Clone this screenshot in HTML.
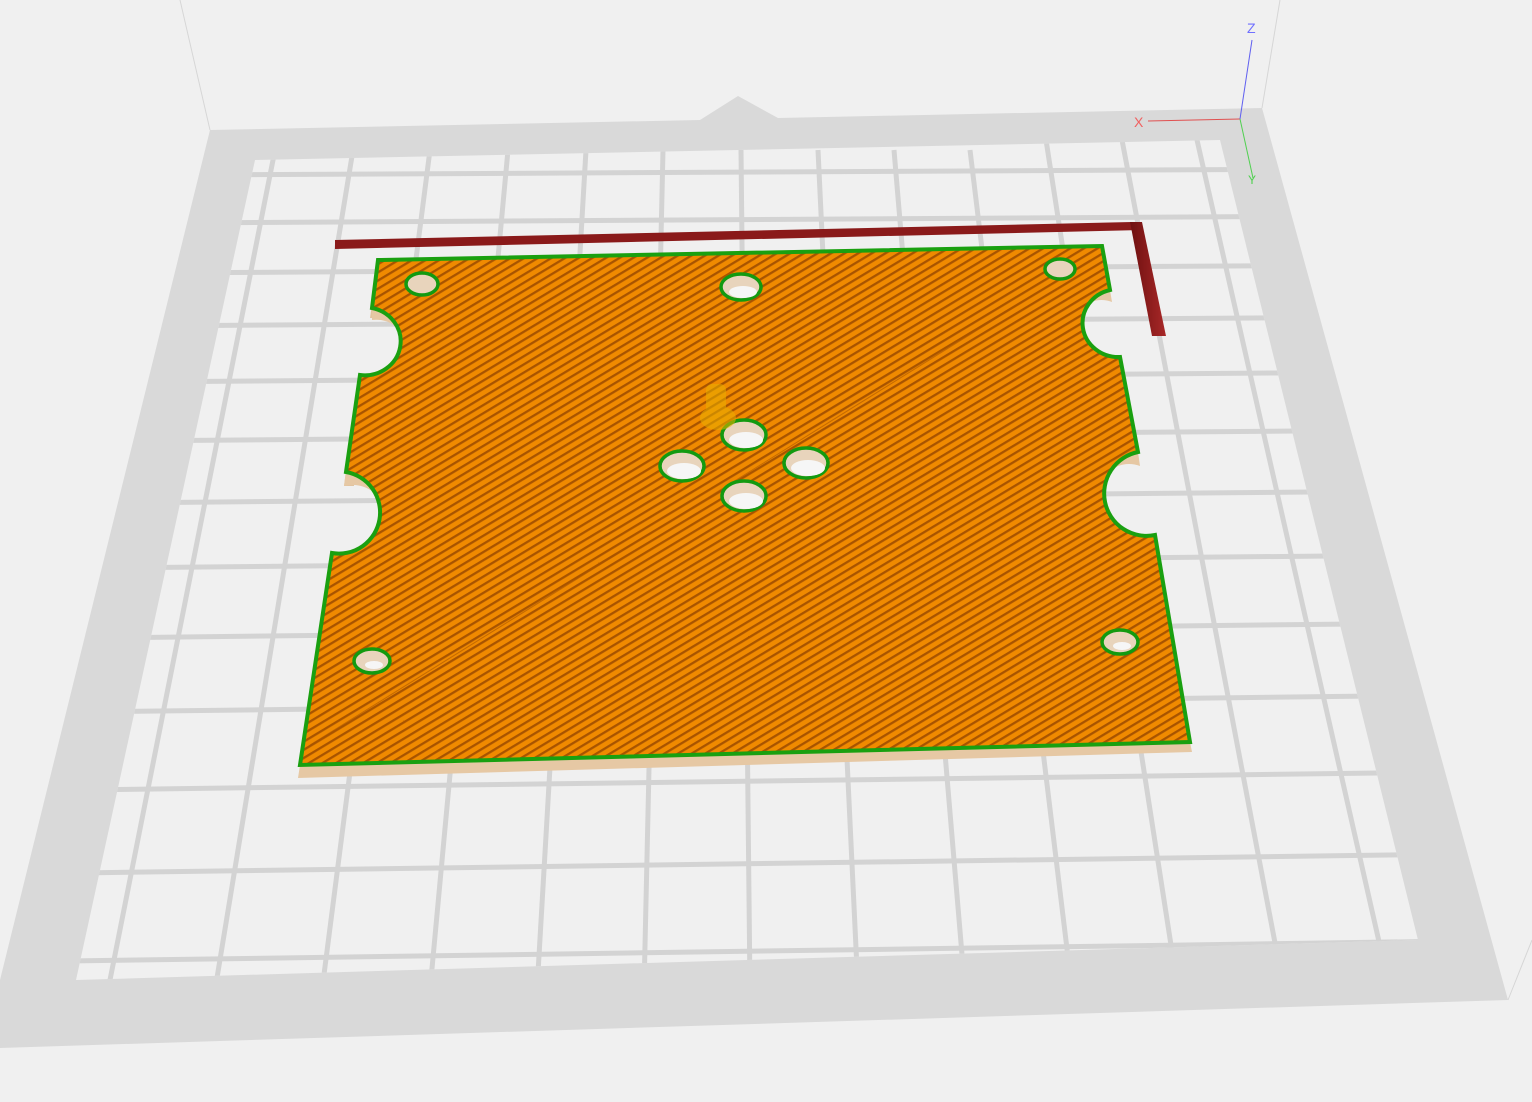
<!DOCTYPE html>
<html><head><meta charset="utf-8"><style>
html,body{margin:0;padding:0;background:#f0f0f0;width:1532px;height:1102px;overflow:hidden}
svg{display:block}
</style></head><body>
<svg width="1532" height="1102" viewBox="0 0 1532 1102" xmlns="http://www.w3.org/2000/svg">
<defs>
<pattern id="st" patternUnits="userSpaceOnUse" width="7" height="7" patternTransform="rotate(-31)">
<rect width="7" height="7" fill="#f08a00"/>
<rect y="0" width="7" height="2.3" fill="#a85400"/>
</pattern>
<clipPath id="bed"><polygon points="255,160 1220,140 1418,940 76,980"/></clipPath>
<linearGradient id="bar" x1="0" x2="1"><stop offset="0" stop-color="#6e1010"/><stop offset="1" stop-color="#a82828"/></linearGradient>
</defs>
<rect width="1532" height="1102" fill="#f0f0f0"/>
<line x1="180" y1="0" x2="210" y2="130" stroke="#d6d6d6" stroke-width="1"/>
<line x1="1280" y1="0" x2="1262" y2="108" stroke="#d6d6d6" stroke-width="1"/>
<line x1="1532" y1="940" x2="1508" y2="1000" stroke="#d6d6d6" stroke-width="1"/>
<polygon points="210,130 700,120 738,96 778,118 1262,108 1508,1000 0,1048 0,980" fill="#d9d9d9"/>
<polygon points="255,160 1220,140 1418,940 76,980" fill="#f0f0f0"/>
<g clip-path="url(#bed)" stroke="#d3d3d3" stroke-width="5">
<line x1="275" y1="150" x2="108" y2="990"/>
<line x1="353" y1="150" x2="215" y2="990"/>
<line x1="430" y1="150" x2="322" y2="990"/>
<line x1="508" y1="150" x2="430" y2="990"/>
<line x1="586" y1="150" x2="537" y2="990"/>
<line x1="663" y1="150" x2="644" y2="990"/>
<line x1="741" y1="150" x2="750" y2="990"/>
<line x1="818" y1="150" x2="858" y2="990"/>
<line x1="894" y1="150" x2="965" y2="990"/>
<line x1="970" y1="150" x2="1072" y2="990"/>
<line x1="1046" y1="140" x2="1178" y2="990"/>
<line x1="1122" y1="140" x2="1284" y2="990"/>
<line x1="1197" y1="140" x2="1390" y2="990"/>
<line x1="0" y1="176" x2="1532" y2="168"/>
<line x1="0" y1="224" x2="1532" y2="215"/>
<line x1="0" y1="274" x2="1532" y2="264"/>
<line x1="0" y1="327" x2="1532" y2="316"/>
<line x1="0" y1="383" x2="1532" y2="371"/>
<line x1="0" y1="442" x2="1532" y2="429"/>
<line x1="0" y1="504" x2="1532" y2="490"/>
<line x1="0" y1="569" x2="1532" y2="554"/>
<line x1="0" y1="639" x2="1532" y2="622"/>
<line x1="0" y1="713" x2="1532" y2="694"/>
<line x1="0" y1="791" x2="1532" y2="771"/>
<line x1="0" y1="874" x2="1532" y2="853"/>
<line x1="0" y1="962" x2="1532" y2="940"/>
</g>
<line x1="1148" y1="121" x2="1240" y2="119" stroke="#e05050" stroke-width="1"/>
<text x="1134" y="127" font-family="Liberation Sans, sans-serif" font-size="14" fill="#f06060">X</text>
<line x1="1240" y1="119" x2="1252" y2="40" stroke="#6060f0" stroke-width="1"/>
<text x="1247" y="33" font-family="Liberation Sans, sans-serif" font-size="14" fill="#7070ff">Z</text>
<line x1="1240" y1="119" x2="1253" y2="178" stroke="#50d050" stroke-width="1"/>
<text x="1248" y="184" font-family="Liberation Sans, sans-serif" font-size="12" fill="#50d050">Y</text>
<polygon points="335,240 1132,222 1142,230 335,249" fill="#8a1a1a"/>
<polygon points="1130,222 1142,222 1166,336 1152,336" fill="url(#bar)"/>
<!-- plate thickness -->
<polygon points="300,765 1190,742 1192,752 298,778" fill="#e6c8a4"/>
<polygon points="372,304 380,304 378,318 370,318" fill="#e2c4a0"/>
<polygon points="346,470 356,470 354,486 344,486" fill="#e2c4a0"/>
<path d="M1110,290 A32,32 0 0 0 1064,322 L1072,336 A30,30 0 0 1 1112,302 Z" fill="#e6c8a4"/>
<path d="M1138,452 A34,34 0 0 0 1090,490 L1098,504 A32,32 0 0 1 1140,466 Z" fill="#e6c8a4"/>
<path d="M372,308 A34,34 0 0 1 412,330 L404,336 A32,32 0 0 0 372,320 Z" fill="#e6c8a4"/>
<path d="M346,472 A36,36 0 0 1 390,495 L382,502 A34,34 0 0 0 344,486 Z" fill="#e6c8a4"/>
<!-- plate -->
<path d="M378,260 L1102,246 L1110,290 A36,34 0 0 0 1120,357 L1138,452 A38,38 0 0 0 1155,535 L1190,742 L300,765 L332,553 A40,40 0 0 0 346,472 L360,375 A36,34 0 0 0 372,308 Z" fill="url(#st)" stroke="#1aa010" stroke-width="4"/>
<line x1="310" y1="745" x2="1090" y2="260" stroke="#a85400" stroke-width="1" opacity="0.6"/>
<g stroke="#139a10" stroke-width="3.5">
<ellipse cx="422" cy="284" rx="16" ry="11" fill="#e8d4bc"/>
<ellipse cx="741" cy="287" rx="20" ry="13" fill="#e8d4bc"/>
<ellipse cx="1060" cy="269" rx="15" ry="10" fill="#e8d4bc"/>
<ellipse cx="744" cy="435" rx="22" ry="15" fill="#e8d4bc"/>
<ellipse cx="682" cy="466" rx="22" ry="15" fill="#e8d4bc"/>
<ellipse cx="806" cy="463" rx="22" ry="15" fill="#e8d4bc"/>
<ellipse cx="744" cy="496" rx="22" ry="15" fill="#e8d4bc"/>
<ellipse cx="372" cy="661" rx="18" ry="12" fill="#e8d4bc"/>
<ellipse cx="1120" cy="642" rx="18" ry="12" fill="#e8d4bc"/>
</g>
<g fill="#f6f6f6">
<ellipse cx="743" cy="292" rx="14" ry="6"/>
<ellipse cx="746" cy="440" rx="17" ry="8"/>
<ellipse cx="684" cy="471" rx="17" ry="8"/>
<ellipse cx="808" cy="468" rx="17" ry="8"/>
<ellipse cx="746" cy="501" rx="17" ry="8"/>
<ellipse cx="374" cy="665" rx="9" ry="4"/>
<ellipse cx="1122" cy="646" rx="9" ry="4"/>
</g>
<g opacity="0.55" fill="#e8b000">
<rect x="706" y="384" width="20" height="30" rx="6"/>
<ellipse cx="718" cy="418" rx="18" ry="12"/>
</g>
</svg>
</body></html>
